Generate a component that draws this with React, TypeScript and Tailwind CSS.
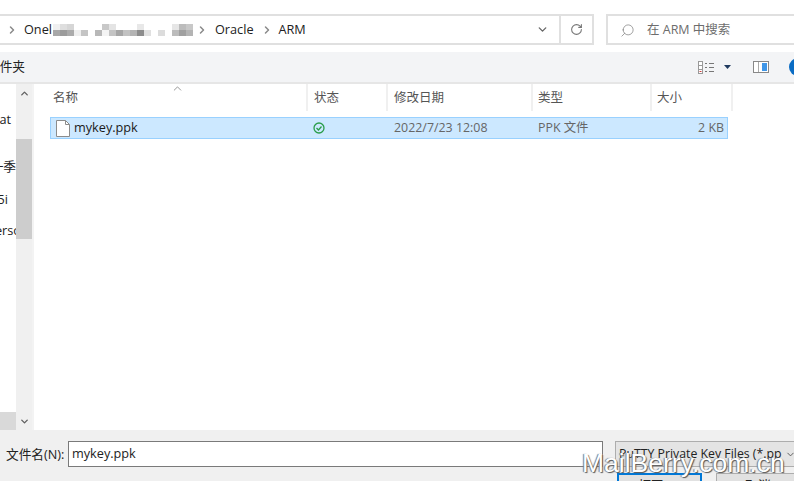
import { ChevronDown, ChevronRight, ChevronUp, RotateCw, Search } from "lucide-react"

// pixelated part of the path: top and bottom cell of each mosaic column
const mosaic = [
  ["bg-[#f0f0f0]", "bg-[#a8a8a8]"], ["bg-[#dedede]", "bg-[#9c9c9c]"], ["bg-[#d6d6d6]", "bg-[#ababab]"],
  ["bg-white", "bg-[#eeeeee]"], ["bg-white", "bg-[#c4c4c4]"], ["bg-white", "bg-white"],
  ["bg-white", "bg-[#b8b8b8]"], ["bg-[#c8c8c8]", "bg-[#f4f4f4]"], ["bg-[#e4e4e4]", "bg-[#c4c4c4]"],
  ["bg-white", "bg-[#a6a6a6]"], ["bg-white", "bg-[#c2c2c2]"], ["bg-white", "bg-[#b4b4b4]"],
  ["bg-[#e8e8e8]", "bg-[#8c8c8c]"], ["bg-white", "bg-[#e0e0e0]"], ["bg-white", "bg-white"],
  ["bg-white", "bg-[#dcdcdc]"], ["bg-white", "bg-white"], ["bg-[#e6e6e6]", "bg-[#bcbcbc]"],
  ["bg-[#bcbcbc]", "bg-[#a0a0a0]"], ["bg-[#c8c8c8]", "bg-[#b4b4b4]"],
]

function Sep() {
  return <ChevronRight size={12} strokeWidth={3} className="text-[#8a8a8a] shrink-0" />
}

function AddressBar() {
  return (
    <div className="flex h-[31px] mt-[14px] gap-3 shrink-0">
      <div className="flex w-[594px] border-y-2 border-r-2 border-[#e0e0e0] items-center">
        <div className="flex items-center gap-[3px] pl-[6px] flex-1 text-[12.7px] text-[#222] pt-[1px]">
          <Sep />
          <span className="ml-[3px] w-[26px]">Onel</span>
          <div className="flex h-[12px] shrink-0">
            {mosaic.map(([top, bottom], i) => (
              <div key={i} className="w-[7px] flex flex-col">
                <div className={`h-[6px] ${top}`} />
                <div className={`h-[6px] ${bottom}`} />
              </div>
            ))}
          </div>
          <Sep />
          <span className="ml-[4px] mr-[4px]">Oracle</span>
          <Sep />
          <span className="ml-[3px]">ARM</span>
        </div>
        <div className="w-[34px] flex justify-center">
          <ChevronDown size={13} strokeWidth={2.5} className="text-[#666]" />
        </div>
        <div className="w-[33px] h-full border-l-2 border-[#e0e0e0] flex items-center justify-center">
          <RotateCw size={13} strokeWidth={2} className="text-[#777]" />
        </div>
      </div>
      <div className="flex-1 border-y-2 border-l-2 border-[#e0e0e0] flex items-center pl-[12px] gap-[12px] text-[12.5px] text-[#6d6d6d] pt-[1px]">
        <Search size={15} strokeWidth={1.1} className="text-[#777] -scale-x-100" />
        <span>在 ARM 中搜索</span>
      </div>
    </div>
  )
}

function Toolbar() {
  return (
    <div className="flex items-center h-[32px] mt-[7px] bg-[#f3f4f6] border-b-2 border-[#e6e6e6] shrink-0 text-[12.7px] text-[#222]">
      <span className="-ml-[13px]">文件夹</span>
      <div className="ml-auto flex items-center">
        <svg width="16" height="13" viewBox="0 0 16 13" className="shrink-0">
          <rect x="0.5" y="0.5" width="4" height="12" fill="#fff" stroke="#999" />
          <path d="M0 4.5h5M0 8.5h5" stroke="#999" />
          <path d="M1.5 10.5h2" stroke="#d04040" />
          <path d="M7 2.5h2M11 2.5h5M7 6.5h2M11 6.5h5M7 10.5h2M11 10.5h5" stroke="#777" />
        </svg>
        <svg width="7" height="4" viewBox="0 0 7 4" className="ml-[10px]">
          <path d="M0 0h7L3.5 4z" fill="#1f3a5f" />
        </svg>
        <svg width="16" height="12" viewBox="0 0 16 12" className="ml-[22px]">
          <rect x="0.5" y="0.5" width="15" height="11" fill="#fff" stroke="#888" />
          <rect x="9" y="2" width="5" height="8" fill="#3f96e8" />
          <path d="M5.5 1v10" stroke="#aaa" />
        </svg>
        <div className="w-[18px] h-[18px] rounded-full bg-[#0a6cc4] ml-[20px] -mr-[13px]" />
      </div>
    </div>
  )
}

function Sidebar() {
  const items = [
    ["at", "mt-[26px] mr-[5px]"],
    ["一季", "mt-[29px] mr-[0px]"],
    ["5i", "mt-[15px] mr-[8px]"],
    ["erso", "mt-[13px] -mr-[5px]"],
  ]
  return (
    <div className="flex w-[34px] shrink-0 border-r-2 border-[#f3f3f3]">
      <div className="w-[16px] overflow-hidden flex flex-col items-end text-[12.7px] text-[#222] leading-[18px] whitespace-nowrap">
        {items.map(([t, m]) => (
          <span key={t} className={m}>{t}</span>
        ))}
        <div className="w-full h-[18px] bg-[#d9d9d9] mt-auto shrink-0" />
      </div>
      <div className="w-[16px] bg-[#f0f0f0] flex flex-col items-center">
        <ChevronUp size={11} strokeWidth={3} className="text-[#606060] mt-[4px] shrink-0" />
        <div className="w-full h-[100px] bg-[#cdcdcd] mt-[40px] shrink-0" />
        <div className="w-full flex-1 flex items-end justify-center">
          <ChevronDown size={11} strokeWidth={3} className="text-[#606060] mb-[3px]" />
        </div>
      </div>
    </div>
  )
}

const columns = [
  ["名称", "w-[258px] pl-[3px]"],
  ["状态", "w-[80px] pl-[6px]"],
  ["修改日期", "w-[145px] pl-[6px]"],
  ["类型", "w-[119px] pl-[5px]"],
  ["大小", "w-[81px] pl-[5px]"],
]

function FileList() {
  return (
    <div className="flex-1 relative pl-[16px]">
      <ChevronUp size={13} strokeWidth={1.25} className="absolute left-[137px] -top-[2px] text-[#666]" />
      <div className="flex h-[27px] text-[12.5px] text-[#555]">
        {columns.map(([t, c]) => (
          <div key={t} className={`flex items-center pt-[2px] border-r-2 border-[#f0f0f0] ${c}`}>{t}</div>
        ))}
      </div>
      <div className="flex items-center h-[22px] w-[678px] mt-[6px] bg-[#cce8ff] border border-[#99d1ff] text-[12.4px] text-[#666]">
        <svg width="14" height="17" viewBox="0 0 14 17" className="ml-[5px] shrink-0">
          <path d="M.5.5h9l4 4v12H.5z" fill="#fff" stroke="#8c8c8c" />
          <path d="M9.5.5v4h4" fill="none" stroke="#8c8c8c" />
        </svg>
        <span className="ml-[4px] w-[239px] text-[12.7px] text-[#1a1a1a]">mykey.ppk</span>
        <svg width="12" height="12" viewBox="0 0 12 12" className="shrink-0">
          <circle cx="6" cy="6" r="5" fill="none" stroke="#2a9d4a" strokeWidth="1.3" />
          <path d="M3.5 6l2 2 3-3.5" fill="none" stroke="#2a9d4a" strokeWidth="1.3" />
        </svg>
        <span className="ml-[69px] w-[144px]">2022/7/23 12:08</span>
        <span className="w-[100px]">PPK 文件</span>
        <span className="flex-1 text-right pr-[3px]">2 KB</span>
      </div>
    </div>
  )
}

function BottomBar() {
  return (
    <div className="flex-1 bg-[#f0f0f0] pt-[11px] flex items-start text-[12.7px] text-[#222]">
      <span className="ml-[6px] w-[62px] leading-[26px] whitespace-nowrap">文件名(N):</span>
      <div className="w-[535px] h-[26px] bg-white border border-[#7a7a7a] flex items-center pl-[3px]">mykey.ppk</div>
      <div className="ml-[12px] flex-1 h-[26px] bg-[#e4e4e4] border-l border-y border-[#adadad] flex items-center pl-[3px] whitespace-nowrap overflow-hidden">
        <span className="w-[163px] shrink-0 text-[12.3px]">PuTTY Private Key Files (*.pp</span>
        <ChevronDown size={11} className="ml-[3px] text-[#555] shrink-0" />
      </div>
    </div>
  )
}

function ActionButtons() {
  return (
    <div className="absolute left-[617px] top-[473px] flex gap-[14px] text-[12.7px] text-[#222]">
      <div className="w-[85px] h-[24px] bg-[#e1e1e1] border-2 border-[#0078d7] text-center leading-[20px]">打开(O)</div>
      <div className="w-[84px] h-[24px] bg-[#e1e1e1] border border-[#adadad] text-center leading-[22px]">取消</div>
    </div>
  )
}

export default function App() {
  return (
    <div className="relative w-[794px] h-[481px] overflow-hidden bg-white flex flex-col font-['Open_Sans','Noto_Sans_CJK_SC',sans-serif]">
      <AddressBar />
      <Toolbar />
      <div className="flex h-[346px] shrink-0">
        <Sidebar />
        <FileList />
      </div>
      <BottomBar />
      <ActionButtons />
      <div className="absolute left-[582px] top-[447px] text-[26.5px] leading-[32px] text-white whitespace-nowrap font-['Liberation_Sans',sans-serif] [text-shadow:1px_1px_1px_#555,-1px_0_1px_#777]">
        MailBerry.com.cn
      </div>
    </div>
  )
}
